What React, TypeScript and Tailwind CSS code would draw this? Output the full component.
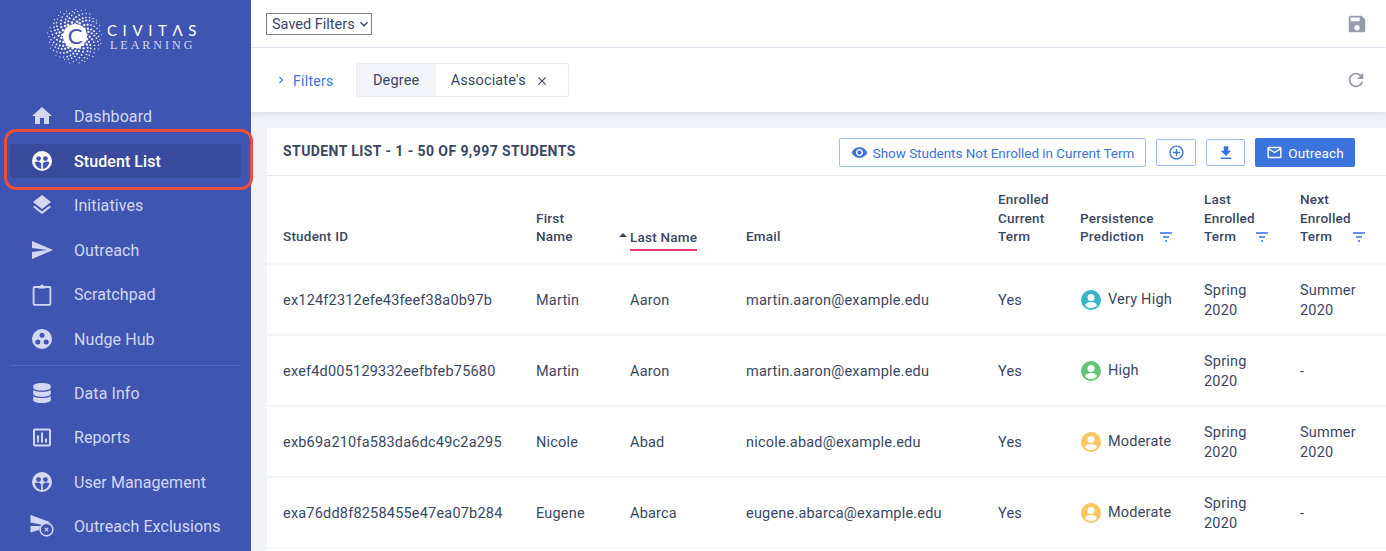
import { MdHome, MdLayers, MdSend, MdOutlineAssessment, MdSave, MdRefresh, MdVisibility, MdAddCircleOutline, MdFileDownload, MdMailOutline, MdKeyboardArrowDown, MdKeyboardArrowRight, MdClose } from 'react-icons/md'
import { FaDatabase } from 'react-icons/fa'
import type { ReactNode } from 'react'

const students = [
  { id: 'ex124f2312efe43feef38a0b97b', first: 'Martin', last: 'Aaron', email: 'martin.aaron@example.edu', level: 'Very High', color: '#38b4cf', next: true },
  { id: 'exef4d005129332eefbfeb75680', first: 'Martin', last: 'Aaron', email: 'martin.aaron@example.edu', level: 'High', color: '#63c578', next: false },
  { id: 'exb69a210fa583da6dc49c2a295', first: 'Nicole', last: 'Abad', email: 'nicole.abad@example.edu', level: 'Moderate', color: '#fbc65f', next: true },
  { id: 'exa76dd8f8258455e47ea07b284', first: 'Eugene', last: 'Abarca', email: 'eugene.abarca@example.edu', level: 'Moderate', color: '#fbc65f', next: false },
]

function Logo() {
  const dots = []
  for (let i = 8; i < 190; i++) {
    const r = 2.05 * Math.sqrt(i) - 1 + (i % 3) * 0.5
    const a = i * 2.39996
    dots.push(
      <circle
        key={i}
        cx={28 + r * Math.cos(a)}
        cy={28 + r * Math.sin(a)}
        r={Math.max(0.5, 1.9 - r / 20)}
        fill="#fff"
      />
    )
  }
  return (
    <svg width="56" height="56" viewBox="0 0 56 56" className="shrink-0">
      {dots}
      <circle cx="28" cy="28" r="12" fill="#fff" />
      <text x="28" y="36" textAnchor="middle" fontSize="22" fill="#4054b2" fontFamily="Lato, sans-serif">C</text>
    </svg>
  )
}

function GroupIcon() {
  return (
    <svg width="20" height="20" viewBox="0 0 20 20">
      <circle cx="10" cy="10" r="10" fill="currentColor" />
      <circle cx="6.6" cy="7.6" r="2.4" fill="#4054b2" />
      <circle cx="13.4" cy="7.6" r="2.4" fill="#4054b2" />
      <path d="M2.6 11.2 C5 10 8 10.5 9.2 12.6 L9.2 18 C6 17.5 3.5 15 2.6 11.2Z" fill="#4054b2" />
      <path d="M17.4 11.2 C15 10 12 10.5 10.8 12.6 L10.8 18 C14 17.5 16.5 15 17.4 11.2Z" fill="#4054b2" />
    </svg>
  )
}

function HubIcon() {
  return (
    <svg width="20" height="20" viewBox="0 0 20 20">
      <circle cx="10" cy="10" r="10" fill="currentColor" />
      <circle cx="10" cy="6.2" r="2.5" fill="#4054b2" />
      <circle cx="5.8" cy="13" r="2.5" fill="#4054b2" />
      <circle cx="14.2" cy="13" r="2.5" fill="#4054b2" />
    </svg>
  )
}

function ClipboardIcon() {
  return (
    <svg width="20" height="23" viewBox="0 0 20 23">
      <rect x="1.6" y="4" width="16.8" height="17.8" rx="1" fill="none" stroke="currentColor" strokeWidth="1.8" />
      <path d="M6.5 5.5 V3 H8.4 A1.6 1.6 0 0 1 11.6 3 H13.5 V5.5Z" fill="currentColor" />
    </svg>
  )
}

function ExclusionIcon() {
  return (
    <svg width="24" height="22" viewBox="0 0 24 22" className="shrink-0">
      <path d="M0.5 0 L20 7 L13 10 L0.5 7.5Z M0.5 11 L10 11 L9 15 L0.5 17.5Z" fill="currentColor" />
      <circle cx="16.5" cy="14.5" r="6.4" fill="#4054b2" stroke="currentColor" strokeWidth="1.6" />
      <path d="M14.9 12.9 L18.1 16.1 M18.1 12.9 L14.9 16.1" stroke="currentColor" strokeWidth="1.3" />
    </svg>
  )
}

function PersonBadge({ color }: { color: string }) {
  return (
    <svg width="20" height="20" viewBox="0 0 20 20" className="shrink-0">
      <circle cx="10" cy="10" r="10" fill={color} />
      <circle cx="10" cy="7.4" r="3.5" fill="#fff" />
      <ellipse cx="10" cy="15" rx="5.8" ry="2.9" fill="#fff" />
    </svg>
  )
}

function FilterIcon({ className }: { className?: string }) {
  return (
    <svg width="12" height="10" viewBox="0 0 12 10" className={className}>
      <path d="M0 1h12M3 5h6M5 9h2" stroke="#2f6fe8" strokeWidth="1.5" />
    </svg>
  )
}

function NavItem({ icon, label, active }: { icon: ReactNode; label: string; active?: boolean }) {
  return (
    <div className="h-[44.5px] flex items-center px-[10px]">
      <div className={`w-full h-[34px] flex items-center pl-[20px] rounded-[3px] text-[16px] tracking-[0.08px] ${active ? 'bg-[#3a4a9c] text-white font-medium' : 'text-[#d3d8f2]'}`}>
        <span className="w-[24px] h-[24px] shrink-0 flex items-center justify-center mr-[20px]">{icon}</span>
        <span className="pt-[2px]">{label}</span>
      </div>
    </div>
  )
}

function Sidebar() {
  return (
    <div className="relative w-[251px] shrink-0 bg-[#4054b2]">
      <div className="h-[94px] flex pl-[47px] pt-[8px]">
        <Logo />
        <div className="ml-[4px] pt-[13px] text-white">
          <div className="text-[15px] leading-[18px] tracking-[5.6px] font-['Lato',sans-serif]">CIVITΛS</div>
          <div className="text-[12px] leading-[12px] tracking-[3px] pl-[3px] text-[#d3d8f2] font-['Liberation_Serif',serif]">LEARNING</div>
        </div>
      </div>
      <NavItem icon={<MdHome size={24} />} label="Dashboard" />
      <NavItem icon={<GroupIcon />} label="Student List" active />
      <NavItem icon={<MdLayers size={24} />} label="Initiatives" />
      <NavItem icon={<MdSend size={24} />} label="Outreach" />
      <NavItem icon={<ClipboardIcon />} label="Scratchpad" />
      <NavItem icon={<HubIcon />} label="Nudge Hub" />
      <div className="mx-[10px] mt-[4px] mb-[4.5px] border-t border-[#5668bd]" />
      <NavItem icon={<FaDatabase size={20} />} label="Data Info" />
      <NavItem icon={<MdOutlineAssessment size={25} />} label="Reports" />
      <NavItem icon={<GroupIcon />} label="User Management" />
      <NavItem icon={<ExclusionIcon />} label="Outreach Exclusions" />
      {/* callout around the current page */}
      <div className="absolute left-[4px] top-[129px] w-[249px] h-[61px] rounded-[12px] border-[3px] border-[#e8503a]" />
    </div>
  )
}

function Header({ children, filter }: { children: ReactNode; filter?: string }) {
  return (
    <th className="align-bottom text-left font-medium pb-[17px] pt-[14px] text-[13.5px] leading-[18.5px] tracking-[0.22px]">
      <div className="relative">
        {children}
        {filter && <FilterIcon className={filter} />}
      </div>
    </th>
  )
}

export default function App() {
  return (
    <div className="flex h-screen overflow-hidden bg-[#f1f3f8] font-['Roboto',sans-serif] text-[#3a4763]">
      <Sidebar />
      <div className="flex-1 min-w-0 flex flex-col">
        <div className="h-[48px] shrink-0 bg-white border-b border-[#e6e9f2] flex items-center justify-between pl-[15px] pr-[18px]">
          <div className="h-[22px] w-[106px] border border-[#808080] flex items-center pl-[5px] text-[14.5px] whitespace-nowrap">
            <span className="pt-[2px]">Saved Filters</span>
            <MdKeyboardArrowDown size={16} className="ml-[1px] shrink-0" />
          </div>
          <MdSave size={22} className="text-[#959caa]" />
        </div>
        <div className="h-[64px] shrink-0 bg-white shadow-[0_2px_6px_rgba(60,70,110,0.14)] flex items-center justify-between pl-[23px] pr-[19px]">
          <div className="flex items-center">
            <MdKeyboardArrowRight size={14} className="text-[#3b74dc]" />
            <span className="ml-[5px] mr-[22px] pt-[2px] text-[14px] tracking-[0.3px] text-[#3b74dc]">Filters</span>
            <div className="h-[34px] flex items-stretch border border-[#e8ebf3] rounded-[3px] text-[14.5px] tracking-[0.15px]">
              <div className="w-[79px] pt-[2px] bg-[#f2f4f9] flex items-center justify-center">Degree</div>
              <div className="w-[132px] pt-[2px] flex items-center pl-[15px]">
                Associate's
                <MdClose size={14} className="ml-[9px]" />
              </div>
            </div>
          </div>
          <MdRefresh size={22} className="text-[#959caa]" />
        </div>
        <div className="flex-1 mt-[16px] ml-[16px] bg-white">
          <div className="h-[48px] border-b border-[#e6e9f2] flex items-center justify-between pl-[16px] pr-[31px] relative">
            <div className="text-[14px] font-bold tracking-[0.42px]">STUDENT LIST - 1 - 50 OF 9,997 STUDENTS</div>
            <div className="flex items-center text-[#3b74dc] text-[13.5px] pt-[2px]">
              <div className="h-[29px] w-[307px] border border-[#9dbcf0] rounded-[2px] flex items-center justify-center tracking-[-0.03px]">
                <MdVisibility size={17} className="mr-[5px]" />
                <span className="pt-[2px]">Show Students Not Enrolled in Current Term</span>
              </div>
              <div className="h-[27px] w-[40px] ml-[10px] border border-[#9dbcf0] rounded-[2px] flex items-center justify-center">
                <MdAddCircleOutline size={17} />
              </div>
              <div className="h-[27px] w-[39px] ml-[10px] border border-[#9dbcf0] rounded-[2px] flex items-center justify-center">
                <MdFileDownload size={18} />
              </div>
              <div className="h-[29px] w-[100px] ml-[10px] bg-[#3b74dc] text-white rounded-[2px] flex items-center justify-center tracking-[0.1px]">
                <MdMailOutline size={17} className="mr-[5px]" />
                <span className="pt-[2px]">Outreach</span>
              </div>
            </div>
          </div>
          <table className="table-fixed w-[1119px] border-collapse">
            <colgroup>
              <col className="w-[269px]" />
              <col className="w-[94px]" />
              <col className="w-[116px]" />
              <col className="w-[252px]" />
              <col className="w-[82px]" />
              <col className="w-[124px]" />
              <col className="w-[96px]" />
              <col className="w-[86px]" />
            </colgroup>
            <thead>
              <tr className="border-b-2 border-[#f5f6fa]">
                <th className="align-bottom text-left font-medium pl-[16px] pb-[17px] text-[13.5px] leading-[18.5px] tracking-[0.22px]">Student ID</th>
                <Header>First<br />Name</Header>
                <th className="align-bottom text-left font-medium pb-[12px] text-[13.5px] leading-[18.5px] tracking-[0.22px]">
                  <div className="relative inline-block border-b-2 border-[#e83e78] pb-[2px]">
                    <span className="absolute left-[-11px] top-[5px] w-0 h-0 border-x-[4px] border-x-transparent border-b-[4px] border-b-[#3a4763]" />
                    Last Name
                  </div>
                </th>
                <Header>Email</Header>
                <Header>Enrolled<br />Current<br />Term</Header>
                <Header filter="absolute left-[80px] bottom-[4px]">Persistence<br />Prediction</Header>
                <Header filter="absolute left-[52px] bottom-[4px]">Last<br />Enrolled<br />Term</Header>
                <Header filter="absolute left-[53px] bottom-[4px]">Next<br />Enrolled<br />Term</Header>
              </tr>
            </thead>
            <tbody className="text-[14.5px] leading-[20px] tracking-[0.2px]">
              {students.map((s) => (
                <tr key={s.id} className="h-[71px] border-b-2 border-[#f5f6fa]">
                  <td className="pl-[16px] pt-[4px]">{s.id}</td>
                  <td className="pt-[4px]">{s.first}</td>
                  <td className="pt-[4px]">{s.last}</td>
                  <td className="pt-[4px]">{s.email}</td>
                  <td className="pt-[4px]">Yes</td>
                  <td>
                    <div className="flex items-center mt-[1px] pl-[1px]">
                      <PersonBadge color={s.color} />
                      <span className="ml-[7px]">{s.level}</span>
                    </div>
                  </td>
                  <td className="pt-[4px]">Spring<br />2020</td>
                  <td className="pt-[4px]">{s.next ? <>Summer<br />2020</> : '-'}</td>
                </tr>
              ))}
            </tbody>
          </table>
        </div>
      </div>
    </div>
  )
}
